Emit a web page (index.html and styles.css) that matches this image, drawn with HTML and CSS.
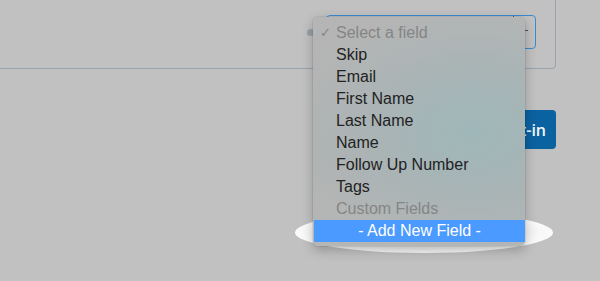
FILE: index.html
```html
<!DOCTYPE html>
<html>
<head>
<meta charset="utf-8">
<link rel="stylesheet" href="styles.css">
</head>
<body>
<div class="page">
  <div class="card">
    <div class="select-row">
      <div class="select-box"><span class="sep"></span><span class="caret"></span></div>
    </div>
  </div>
  <div class="actions">
    <button class="btn">Opt-in</button>
  </div>

  <div class="glow"></div>
  <span class="dot"></span>
  <ul class="menu">
    <li class="item disabled"><span class="check">✓</span>Select a field</li>
    <li class="item">Skip</li>
    <li class="item">Email</li>
    <li class="item">First Name</li>
    <li class="item">Last Name</li>
    <li class="item">Name</li>
    <li class="item">Follow Up Number</li>
    <li class="item">Tags</li>
    <li class="item disabled">Custom Fields</li>
    <li class="item active">- Add New Field -</li>
  </ul>
</div>
</body>
</html>
```

FILE: styles.css
```css
html, body {
  margin: 0;
  padding: 0;
  background: #c1c1c1;
  width: 600px;
  height: 281px;
  overflow: hidden;
}
.page {
  position: relative;
  display: flow-root;
  width: 600px;
  height: 281px;
  font-family: "Liberation Sans", Arial, sans-serif;
}
.card {
  margin-top: -10px;
  margin-left: -10px;
  width: 566px;
  height: 79px;
  border: 1px solid #9aa3ad;
  border-radius: 0 0 4px 0;
  box-sizing: border-box;
  display: flex;
  justify-content: flex-end;
  padding-top: 24px;
  padding-right: 19px;
}
.select-box {
  position: relative;
  width: 210px;
  height: 34px;
  border: 1px solid #3a8ad0;
  border-radius: 4px;
  box-sizing: border-box;
}
.sep {
  position: absolute;
  left: 186px;
  top: 0;
  width: 1px;
  height: 4px;
  background: #555;
}
.caret {
  position: absolute;
  left: 198px;
  top: 14px;
  width: 3px;
  height: 1px;
  background: #555;
}
.actions {
  display: flex;
  justify-content: flex-end;
  padding-right: 44px;
  margin-top: 41px;
}
.btn {
  width: 90px;
  height: 39px;
  border: none;
  border-radius: 4px;
  background: #0b62a0;
  color: #f2f6fa;
  font-family: "Open Sans", sans-serif;
  font-size: 16px;
  font-weight: 600;
  text-align: right;
  padding: 0 10px 0 0;
}
.glow {
  position: absolute;
  left: 295px;
  top: 212px;
  width: 258px;
  height: 41px;
  border-radius: 50%;
  background: radial-gradient(ellipse at center, #e6e6e6 0%, #f2f2f2 55%, #ffffff 78%);
}
.dot {
  position: absolute;
  left: 307px;
  top: 29px;
  width: 7px;
  height: 7px;
  border-radius: 50%;
  background: #9aa0a8;
}
.menu {
  position: absolute;
  left: 313px;
  top: 17px;
  width: 212px;
  margin: 0;
  padding: 5px 0 4px;
  list-style: none;
  box-sizing: border-box;
  border-radius: 5px;
  background:
    radial-gradient(ellipse 170px 130px at 160px 115px, rgba(158,184,186,0.95) 0%, rgba(164,180,182,0.65) 50%, rgba(176,178,178,0) 100%),
    linear-gradient(180deg, #b5b5b5 0%, #b1b3b3 60%, #b6b6b6 100%);
  box-shadow: 0 0 0 1px rgba(0,0,0,0.06), 0 4px 12px rgba(0,0,0,0.25);
}
.item {
  position: relative;
  height: 22px;
  line-height: 22px;
  padding-left: 23px;
  font-size: 16px;
  color: #222;
  white-space: nowrap;
}
.item.disabled {
  color: #858585;
}
.check {
  position: absolute;
  left: 7px;
  top: 0;
  font-size: 13px;
  font-family: "DejaVu Sans", sans-serif;
  color: #858585;
}
.item.active {
  background: #4a9aff;
  color: #fff;
  padding-left: 0;
  text-align: center;
  margin-left: 1px;
}
```
